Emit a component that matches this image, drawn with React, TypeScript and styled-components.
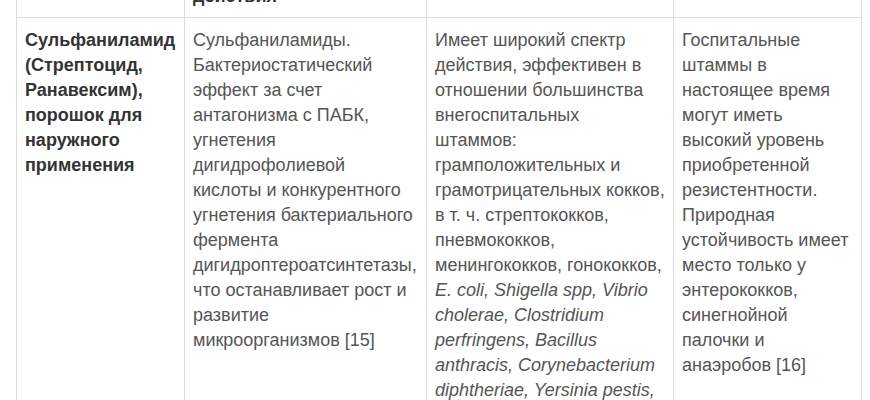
import React from "react";
import styled, { createGlobalStyle } from "styled-components";

const GlobalStyle = createGlobalStyle`
  html, body {
    margin: 0;
    padding: 0;
    background: #ffffff;
  }
  body {
    font-family: "Liberation Sans", Arial, Helvetica, sans-serif;
    font-size: 18px;
    line-height: 25px;
    color: #555555;
  }
`;

const columns = [168, 242, 247, 188];

const headers = [
  "Препарат",
  "Механизм антибактериального действия",
  "Спектр активности",
  "Резистентность",
];

const App = () => {
  return (
    <>
      <GlobalStyle />
      <Page>
        <Table>
          <colgroup>
            {columns.map((w, i) => (
              <col key={i} style={{ width: w }} />
            ))}
          </colgroup>
          <thead>
            <tr>
              {headers.map((h) => (
                <HeadCell key={h}>{h}</HeadCell>
              ))}
            </tr>
          </thead>
          <tbody>
            <tr>
              <Cell $bold>
                Сульфаниламид (Стрептоцид, Ранавексим), порошок для наружного
                применения
              </Cell>
              <Cell>
                Сульфаниламиды. Бактериостатический эффект за счет антагонизма
                с ПАБК, угнетения дигидрофолиевой кислоты и конкурентного
                угнетения бактериального фермента дигидроптероатсинтетазы, что
                останавливает рост и развитие микроорганизмов [15]
              </Cell>
              <Cell>
                Имеет широкий спектр действия, эффективен в отношении
                большинства внегоспитальных штаммов: грамположительных и
                грамотрицательных кокков, в т. ч. стрептококков, пневмококков,
                менингококков, гонококков,{" "}
                <Latin>
                  E. coli, Shigella spp, Vibrio cholerae, Clostridium
                  perfringens, Bacillus anthracis, Corynebacterium diphtheriae,
                  Yersinia pestis,
                </Latin>{" "}
                а также <Latin>Chlamydia spp, Actinomyces israelii</Latin> и
                токсоплазм [15]
              </Cell>
              <Cell>
                Госпитальные штаммы в настоящее время могут иметь высокий
                уровень приобретенной резистентности. Природная устойчивость
                имеет место только у энтерококков, синегнойной палочки и
                анаэробов [16]
              </Cell>
            </tr>
          </tbody>
        </Table>
      </Page>
    </>
  );
};

const Page = styled.div`
  width: 870px;
  height: 400px;
  overflow: hidden;
  padding-left: 16px;
  box-sizing: border-box;
`;

const Table = styled.table`
  width: 845px;
  table-layout: fixed;
  border-collapse: collapse;
  margin-top: -75px;
`;

const HeadCell = styled.th`
  padding: 8px;
  border: 1px solid #dddddd;
  text-align: left;
  vertical-align: top;
  font-weight: 700;
  color: #333333;
`;

const Cell = styled.td<{ $bold?: boolean }>`
  padding: 10px 8px;
  border: 1px solid #dddddd;
  vertical-align: top;
  font-weight: ${({ $bold }) => ($bold ? 700 : 400)};
  color: ${({ $bold }) => ($bold ? "#333333" : "#555555")};
`;

const Latin = styled.i`
  font-style: italic;
`;

export default App;
